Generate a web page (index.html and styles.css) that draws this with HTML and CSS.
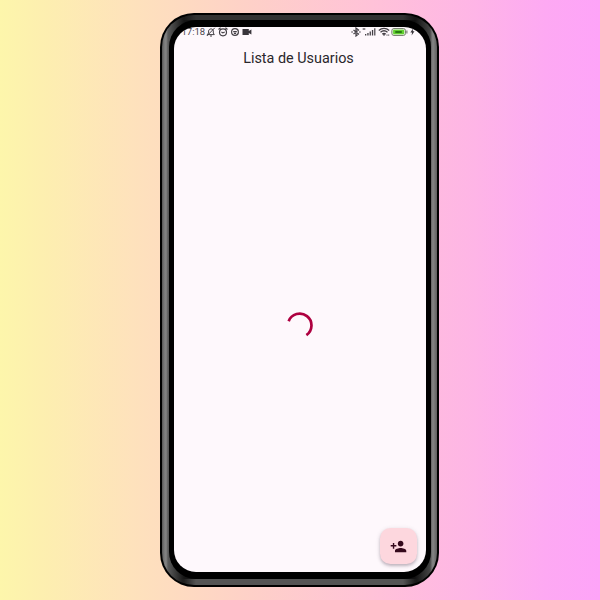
FILE: index.html
```
<!DOCTYPE html>
<html lang="es">
<head>
<meta charset="utf-8">
<title>Lista de Usuarios</title>
<link rel="stylesheet" href="styles.css">
</head>
<body>
<div class="phone">
  <div class="rim">
    <div class="bezel">
      <main class="screen">
        <div class="status">
          <div class="status-left">
            <span class="time">17:18</span>
            <svg width="10" height="10" viewBox="0 0 10 10" fill="none" stroke="#444046" stroke-width="1"><path d="M1.3 7.6h7L7.3 6V4C7.3 1.2 2.8 1.2 2.6 4v2zM4 9h2M8.8.8L.8 9"/></svg>
            <svg width="10" height="10" viewBox="0 0 10 10" fill="none" stroke="#444046" stroke-width="1.2"><circle cx="5" cy="5.3" r="3.5"/><path d="M.5 2.5L2.6.8M9.5 2.5L7.4.8M3.4 4.9l1.5 1 1.8-1"/></svg>
            <svg width="10" height="10" viewBox="0 0 10 10" fill="none" stroke="#444046" stroke-width="1.2"><circle cx="5" cy="5" r="3.4"/><path d="M3.2 4.6h3.6M3.9 6.4h2.2"/></svg>
            <svg width="10" height="10" viewBox="0 0 10 10" fill="#39353b"><path d="M.5 2h6.3v2.1L9.4 2.5v5L6.8 5.9V8H.5z"/></svg>
          </div>
          <div class="status-right">
            <svg width="10" height="10" viewBox="0 0 10 10" fill="none" stroke="#444046" stroke-width="1.2"><path d="M2.5 3l5 4L5 9V1l2.5 2-5 4M.3 5h1.6M8.1 5h1.6"/></svg>
            <svg width="14" height="10" viewBox="0 0 14 10" fill="#444046"><path d="M.8 1h.8v2H.8zM2.4 1h.8v2h-.8zM3 7h1.3v1.6H3zM5.3 6h1.3v2.6H5.3zM7.6 4.6h1.3v4H7.6zM9.9 3h1.3v5.6H9.9zM12.2 1.2h1.2v7.4h-1.2z"/></svg>
            <svg width="12" height="10" viewBox="0 0 12 10" fill="none" stroke="#444046" stroke-width="1.3"><path d="M.8 3.4C3.8.7 8.2.7 11.2 3.4M2.5 5.2c2.2-1.8 4.8-1.8 7 0M4.3 7c1-.8 2.4-.8 3.4 0"/><path d="M5 7.5h2L6 8.7zM9 7.4v1.4M10.7 7.4v1.4" stroke-width=".8"/></svg>
            <svg width="17" height="10" viewBox="0 0 17 10"><rect x=".8" y="1.5" width="13.7" height="7" rx="2.2" fill="#d8edcb" stroke="#7b8374"/><rect x="2.1" y="2.8" width="11" height="4.4" rx="1" fill="#62d030"/><path d="M4.3 4h6.5v2H4.3z" fill="#287b12"/><path d="M15.4 3.5h1v3h-1z" fill="#5f6759"/></svg>
            <svg width="5" height="10" viewBox="0 0 5 10" fill="#39353b"><path d="M3 1.5L.4 5.5h1.7l-.5 3L4.5 4.3H2.8z"/></svg>
          </div>
        </div>
        <h1 class="title">Lista de Usuarios</h1>
        <div class="content">
          <svg class="spinner" width="28" height="28" viewBox="0 0 28 28" fill="none" stroke="#ae0040" stroke-width="2.7"><path d="M2.65 10.2A11.8 11.8 0 1 1 20.4 24.1"/></svg>
        </div>
        <button class="fab" aria-label="Agregar usuario">
          <svg width="17" height="17" viewBox="0 0 24 24" fill="#35091c"><path d="M15 12c2.21 0 4-1.79 4-4s-1.79-4-4-4-4 1.79-4 4 1.79 4 4 4zm-9-2V7H4v3H1v2h3v3h2v-3h3v-2H6zm9 4c-2.67 0-8 1.34-8 4v2h16v-2c0-2.66-5.33-4-8-4z"/></svg>
        </button>
      </main>
    </div>
  </div>
</div>
</body>
</html>
```
FILE: styles.css
```
* { box-sizing: border-box; }

body {
  margin: 0;
  height: 600px;
  overflow: hidden;
  display: flex;
  justify-content: center;
  align-items: flex-start;
  padding-top: 13px;
  padding-right: 1px;
  font-family: Roboto, sans-serif;
  background: linear-gradient(90deg, #fdf6ab 0%, #fdeeb0 8%, #fee2bc 22%, #fed0c8 42%, #ffc2d8 62%, #feb5e6 79%, #fda9f3 91%, #fea4f8 100%);
}

.phone {
  width: 279px;
  height: 573.5px;
  padding: 1.5px 2px;
  border-radius: 34px;
  background: #000;
}

.rim {
  height: 100%;
  padding: 5px 6.5px 6px;
  border-radius: 32px;
  background:
    linear-gradient(90deg, transparent, #323232 14px, #323232 calc(100% - 14px), transparent) center top / 235px 5px no-repeat,
    linear-gradient(90deg, transparent, #545454 14px, #545454 calc(100% - 14px), transparent) center bottom / 235px 6px no-repeat,
    linear-gradient(90deg, #555 0, #777 2px, #858585 4px, #5b5b5b 6px, #151515 22px, #111 253px, #444 268px, #777 270px, #858585 271px, #606060 275px);
}

.bezel {
  height: 100%;
  padding: 7.5px 5px 7px;
  border-radius: 27px;
  background: #000;
}

.screen {
  position: relative;
  height: 100%;
  overflow: hidden;
  display: flex;
  flex-direction: column;
  border-radius: 22px;
  background: #fef8fc;
}

.status {
  flex: none;
  height: 10px;
  padding-left: 8px;
  padding-right: 11px;
  display: flex;
  justify-content: space-between;
}

.status svg { display: block; }

.status-left,
.status-right {
  display: flex;
  align-items: center;
  gap: 2px;
}

.time {
  margin-right: -1px;
  font-size: 9.5px;
  line-height: 10px;
  color: #4a464c;
}

.status-right { gap: 1.5px; }

.title {
  margin: 11.5px 2px 0 0;
  font-size: 14.4px;
  line-height: 20px;
  font-weight: 400;
  text-align: center;
  color: #2a272b;
}

.content {
  flex: 1;
  display: flex;
  justify-content: center;
  align-items: center;
  padding-top: 10px;
}

.fab {
  position: absolute;
  right: 9px;
  bottom: 8px;
  width: 37px;
  height: 36px;
  padding: 0;
  border: 0;
  border-radius: 10.5px;
  display: flex;
  justify-content: center;
  align-items: center;
  background: #fdd7de;
  box-shadow: 0 2px 3px rgba(60, 40, 60, .26), 0 1px 5px rgba(60, 40, 60, .12);
}
```
